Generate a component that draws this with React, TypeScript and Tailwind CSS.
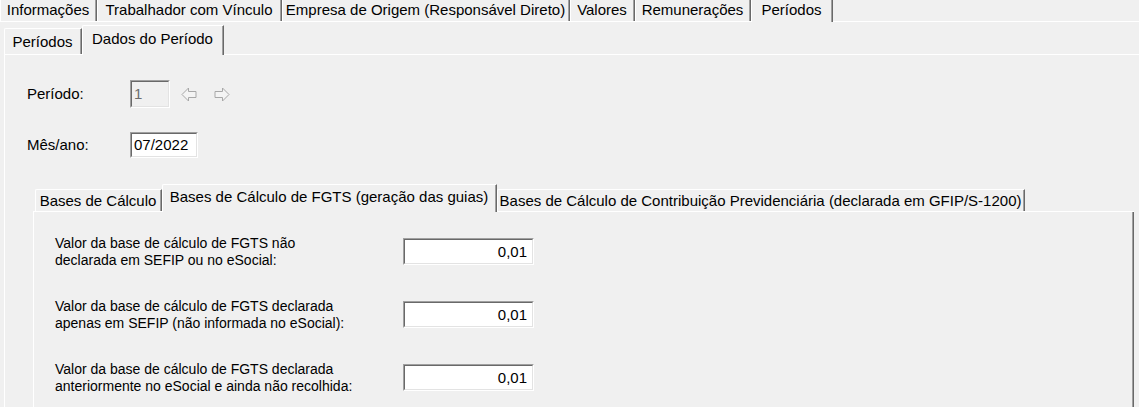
import React from "react";

function TabL1({ w, active, children }: { w: string; active?: boolean; children: React.ReactNode }) {
  if (active) {
    return (
      <div className={`${w} h-[22px] -mb-px relative z-10 bg-[#f0f0f0] border-l border-white border-r border-r-[#696969]`}>
        <div className="h-full border-r border-r-[#a0a0a0] flex items-start justify-center pt-[2px] leading-[16px]">{children}</div>
      </div>
    );
  }
  return (
    <div className={`${w} h-[21px] border-l border-white border-r border-r-[#696969]`}>
      <div className="h-full border-r border-r-[#a0a0a0] flex items-start justify-center pt-[2px] leading-[16px]">{children}</div>
    </div>
  );
}

function TabL({ w, h, active, children }: { w: string; h: string; active?: boolean; children: React.ReactNode }) {
  return (
    <div
      className={`${w} ${h} ${active ? "-mb-px relative z-10" : ""} bg-[#f0f0f0] border-l border-t border-white border-r border-r-[#696969] rounded-tl-[2px]`}
    >
      <div className="h-full border-r border-r-[#a0a0a0] flex items-center justify-center leading-[16px]">{children}</div>
    </div>
  );
}

function Edit({ cls, children, disabled, right }: { cls: string; children: React.ReactNode; disabled?: boolean; right?: boolean }) {
  return (
    <div className={`${cls} border-t border-l border-[#a0a0a0] border-b border-r border-b-white border-r-white`}>
      <div
        className={`h-full border-t border-l border-[#696969] border-b border-r border-b-[#e3e3e3] border-r-[#e3e3e3] flex items-center leading-[16px] ${
          disabled ? "bg-[#f0f0f0] text-[#6d6d6d]" : "bg-white text-black"
        } ${right ? "justify-end pr-[5px]" : "pl-[2px]"}`}
      >
        {children}
      </div>
    </div>
  );
}

function Arrow({ dir }: { dir: "l" | "r" }) {
  return (
    <svg width="16" height="15" viewBox="0 0 16 15" className={dir === "r" ? "-scale-x-100" : ""}>
      <polygon points="1,7.5 7.5,1 7.5,4.5 15,4.5 15,10.5 7.5,10.5 7.5,14" fill="#f4f4f4" stroke="#a8a8a8" strokeWidth="1" />
    </svg>
  );
}

function FieldRow({ l1, l2, cls }: { l1: string; l2: string; cls: string }) {
  return (
    <div className={`flex items-center h-[27px] ${cls}`}>
      <div className="w-[348px] leading-[17px] text-[14px]">
        <div>{l1}</div>
        <div>{l2}</div>
      </div>
      <Edit cls="w-[131px] h-[27px]" right>
        0,01
      </Edit>
    </div>
  );
}

export default function App() {
  return (
    <div className="w-[1139px] h-[407px] overflow-hidden bg-[#f0f0f0] font-['Liberation_Sans',Arial,sans-serif] text-[15px] text-black">
      {/* level 1 tabs */}
      <div className="flex items-end h-[22px] border-b border-white">
        <TabL1 w="w-[97px]">Informações</TabL1>
        <TabL1 w="w-[185px]">Trabalhador com Vínculo</TabL1>
        <TabL1 w="w-[288px]">Empresa de Origem (Responsável Direto)</TabL1>
        <TabL1 w="w-[65px]">Valores</TabL1>
        <TabL1 w="w-[116px]">Remunerações</TabL1>
        <TabL1 w="w-[82px]" active>
          Períodos
        </TabL1>
      </div>

      {/* level 1 panel */}
      <div className="pt-[3px] pl-[4px]">
        {/* level 2 tabs */}
        <div className="flex items-end h-[30px] border-b border-white">
          <TabL w="w-[78px]" h="h-[26px]">
            Períodos
          </TabL>
          <TabL w="w-[142px]" h="h-[30px]" active>
            <span className="-mt-[3px]">Dados do Período</span>
          </TabL>
        </div>

        {/* level 2 panel */}
        <div className="border-l border-white pl-[22px] pt-[25px] h-[360px]">
          <div className="flex items-center h-[28px]">
            <div className="w-[103px]">Período:</div>
            <Edit cls="w-[40px] h-[28px]" disabled>
              1
            </Edit>
            <div className="ml-[11px] flex items-center gap-[17px]">
              <Arrow dir="l" />
              <Arrow dir="r" />
            </div>
          </div>
          <div className="flex items-center h-[26px] mt-[24px]">
            <div className="w-[103px]">Mês/ano:</div>
            <Edit cls="w-[68px] h-[26px]">07/2022</Edit>
          </div>

          {/* inner tab control */}
          <div className="mt-[26px] ml-[6px] w-[1101px]">
            <div className="flex items-end h-[28px] border-b border-white pl-[2px]">
              <TabL w="w-[127px]" h="h-[22px]">
                Bases de Cálculo
              </TabL>
              <TabL w="w-[335px]" h="h-[28px]" active>
                <span className="-mt-[3px]">Bases de Cálculo de FGTS (geração das guias)</span>
              </TabL>
              <TabL w="w-[528px]" h="h-[22px]">
                Bases de Cálculo de Contribuição Previdenciária (declarada em GFIP/S-1200)
              </TabL>
            </div>
            <div className="border-l border-white border-r border-r-[#696969] h-[220px]">
              <div className="h-full border-r border-r-[#a0a0a0] pl-[21px] pt-[26px]">
                <FieldRow cls="" l1="Valor da base de cálculo de FGTS não" l2="declarada em SEFIP ou no eSocial:" />
                <FieldRow
                  cls="mt-[36px]"
                  l1="Valor da base de cálculo de FGTS declarada"
                  l2="apenas em SEFIP (não informada no eSocial):"
                />
                <FieldRow
                  cls="mt-[36px]"
                  l1="Valor da base de cálculo de FGTS declarada"
                  l2="anteriormente no eSocial e ainda não recolhida:"
                />
              </div>
            </div>
          </div>
        </div>
      </div>
    </div>
  );
}
